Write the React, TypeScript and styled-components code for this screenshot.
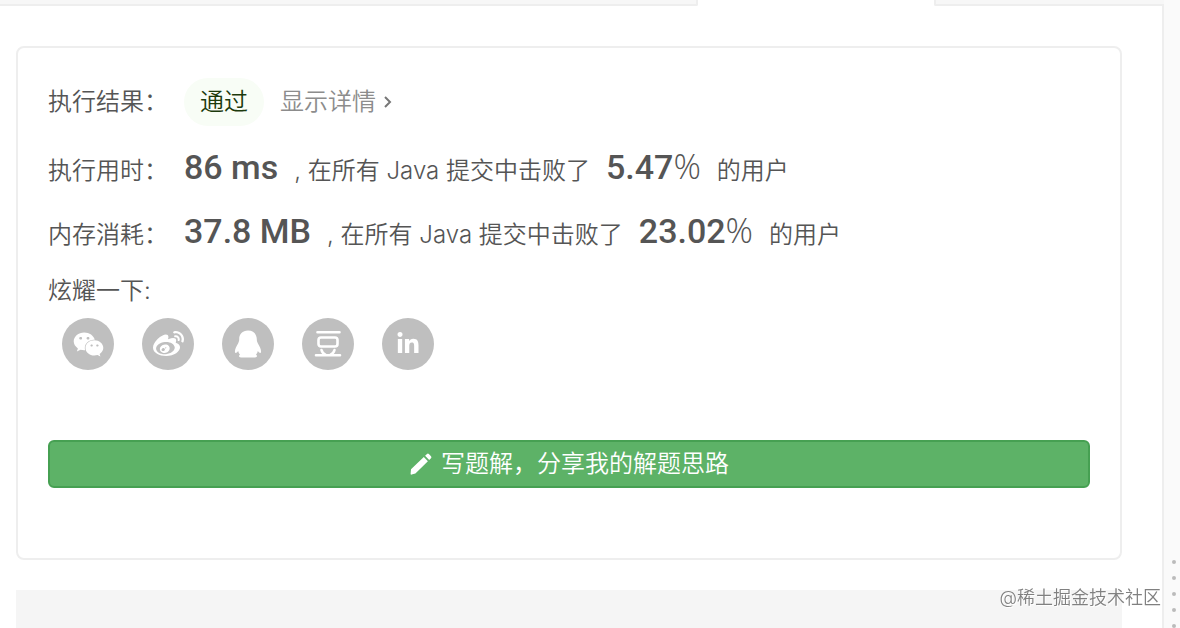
import React from "react";
import styled, { createGlobalStyle } from "styled-components";
import { FaWeixin, FaWeibo } from "react-icons/fa";
import { FaLinkedinIn } from "react-icons/fa6";

const GlobalStyle = createGlobalStyle`
  *, *::before, *::after { box-sizing: border-box; }
  body {
    margin: 0;
    background: #fff;
    color: #555;
    font-family: Inter, "Noto Sans CJK SC", sans-serif;
    font-size: 24px;
    font-weight: 350;
    line-height: 32px;
  }
`;

const Page = styled.div`
  display: flex;
  min-height: 100vh;
`;

const Panel = styled.div`
  flex: 1;
  min-width: 0;
  display: flex;
  flex-direction: column;
`;

const TabStrip = styled.div`
  display: flex;
  height: 6px;
`;

const TabFill = styled.div<{ $side: "left" | "right" }>`
  background: #f7f7f7;
  border-bottom: 2px solid #eee;
  ${(p) =>
    p.$side === "left"
      ? "flex: 0 0 60%; border-right: 2px solid #eee; border-bottom-right-radius: 2px;"
      : "flex: 1; border-left: 2px solid #eee; border-bottom-left-radius: 2px;"}
`;

const ActiveTab = styled.div`
  flex: 0 0 236px;
`;

const Content = styled.main`
  flex: 1;
  display: flex;
  flex-direction: column;
  gap: 30px;
  padding: 40px 40px 0 16px;
  border-right: 2px solid #eee;
`;

const Card = styled.section`
  padding: 30px 30px 70px;
  border: 2px solid #eee;
  border-radius: 8px;
`;

const StatusRow = styled.div`
  display: flex;
  align-items: center;
  height: 48px;
  margin-bottom: 10px;
`;

const StatRow = styled.div`
  display: flex;
  align-items: baseline;
  height: 64px;
  line-height: 60px;
  white-space: pre;
`;

const Label = styled.span`
  flex: 0 0 136px;
`;

const Status = styled.span`
  padding: 0 16px;
  margin-right: 16px;
  border-radius: 24px;
  background: #f8fdf6;
  color: #1c3a0c;
  line-height: 48px;
`;

const DetailLink = styled.a`
  display: flex;
  align-items: center;
  gap: 8px;
  color: #8c8c8c;
  text-decoration: none;
`;

const Figure = styled.strong`
  margin-right: 16px;
  font-family: Roboto, sans-serif;
  font-size: 34px;
  font-weight: 500;
`;

const Rate = styled(Figure)`
  margin-left: 16px;
`;

const Percent = styled.span`
  font-family: "Open Sans", sans-serif;
  font-weight: 300;
`;

const ShareTitle = styled.div`
  line-height: 54px;
`;

const ShareList = styled.div`
  display: flex;
  gap: 28px;
  margin: 0 14px 70px;
`;

const ShareButton = styled.button`
  display: grid;
  place-items: center;
  width: 52px;
  height: 52px;
  padding: 0;
  border: 0;
  border-radius: 50%;
  background: #bfbfbf;
  color: #fff;
`;

const WriteButton = styled.button`
  display: flex;
  align-items: center;
  justify-content: center;
  gap: 8px;
  width: 100%;
  height: 48px;
  padding: 0;
  border: 2px solid #46a052;
  border-radius: 6px;
  background: #5db267;
  color: #fff;
  font: inherit;
`;

const NextBlock = styled.div`
  flex: 1;
  min-height: 38px;
  background: #f5f5f5;
`;

const Gutter = styled.div`
  flex: 0 0 16px;
  display: flex;
  flex-direction: column;
  justify-content: flex-end;
  align-items: center;
  gap: 12px;
  padding-left: 4px;
  background: #fafafa;
`;

const Dot = styled.i`
  width: 4px;
  height: 4px;
  border-radius: 50%;
  background: #bbb;
`;

const Watermark = styled.div`
  position: fixed;
  right: 19px;
  bottom: 16px;
  color: #808080;
  font-size: 18px;
  line-height: 28px;
  text-shadow: 1px 1px 0 #fff;
`;

function DoubanIcon() {
  return (
    <svg width="28" height="28" viewBox="0 0 28 28" fill="none" stroke="#fff" strokeWidth="2.6" strokeLinecap="round">
      <path d="M3.500 2.300h22M2 25.200h24M7.500 20c.6 2.200 1.800 3.800 4 4.600M20.500 20c-.6 2.200-1.800 3.800-4 4.600" />
      <rect x="4.500" y="7.500" width="19" height="9" rx="2.500" />
    </svg>
  );
}

function QQIcon() {
  return (
    <svg width="28" height="28" viewBox="0 0 28 28" fill="#fff">
      <path d="M14 .6C8.400 .6 5.200 4.400 5.200 9.200C5.200 10.500 5 11.400 4.200 13.300C2.300 16.500 .6 19.800 1 22.200C1.300 23.600 2.900 22.700 4.200 20.900C4.500 22.300 5 23.400 6 24.500C4.600 25.200 4.500 27.400 7 27.400H21C23.500 27.400 23.400 25.200 22 24.500C23 23.400 23.500 22.300 23.800 20.900C25.100 22.700 26.700 23.600 27 22.200C27.400 19.800 25.700 16.500 23.800 13.300C23 11.400 22.800 10.500 22.800 9.200C22.800 4.400 19.600 .6 14 .6Z" />
    </svg>
  );
}

function PencilIcon() {
  return (
    <svg width="24" height="24" viewBox="0 0 24 24" fill="#fff">
      <path d="M2 17.200 14.800 5 18.900 9.200 6.400 21.600 2.600 22.600Q1.600 22.800 1.600 21.800ZM16.100 3.800 18 2Q19 1.200 19.900 2.100L22 4.200Q22.900 5.200 22 6.200L20.200 8Z" />
    </svg>
  );
}

function ChevronIcon() {
  return (
    <svg width="8" height="12" viewBox="0 0 8 12" fill="none" stroke="#777" strokeWidth="2">
      <path d="M1 1l5 5-5 5" />
    </svg>
  );
}

const stats = [
  { label: "执行用时：", value: "86 ms", rate: "5.47" },
  { label: "内存消耗：", value: "37.8 MB", rate: "23.02" },
];

const shares = [
  { name: "微信", icon: <FaWeixin size={31} /> },
  { name: "微博", icon: <FaWeibo size={31} /> },
  { name: "QQ", icon: <QQIcon /> },
  { name: "豆瓣", icon: <DoubanIcon /> },
  { name: "LinkedIn", icon: <FaLinkedinIn size={24} /> },
];

export default function App() {
  return (
    <>
      <GlobalStyle />
      <Page>
        <Panel>
          <TabStrip>
            <TabFill $side="left" />
            <ActiveTab />
            <TabFill $side="right" />
          </TabStrip>
          <Content>
            <Card>
              <StatusRow>
                <Label>执行结果：</Label>
                <Status>通过</Status>
                <DetailLink href="#detail">
                  显示详情
                  <ChevronIcon />
                </DetailLink>
              </StatusRow>
              {stats.map((s) => (
                <StatRow key={s.label}>
                  <Label>{s.label}</Label>
                  <Figure>{s.value}</Figure>
                  <span>, 在所有 Java 提交中击败了</span>
                  <Rate>
                    {s.rate}
                    <Percent>%</Percent>
                  </Rate>
                  <span>的用户</span>
                </StatRow>
              ))}
              <ShareTitle>炫耀一下:</ShareTitle>
              <ShareList>
                {shares.map((s) => (
                  <ShareButton key={s.name} type="button" aria-label={s.name}>
                    {s.icon}
                  </ShareButton>
                ))}
              </ShareList>
              <WriteButton type="button">
                <PencilIcon />
                写题解，分享我的解题思路
              </WriteButton>
            </Card>
            <NextBlock />
          </Content>
        </Panel>
        <Gutter>
          <Dot />
          <Dot />
          <Dot />
          <Dot />
          <Dot />
        </Gutter>
      </Page>
      <Watermark>@稀土掘金技术社区</Watermark>
    </>
  );
}
